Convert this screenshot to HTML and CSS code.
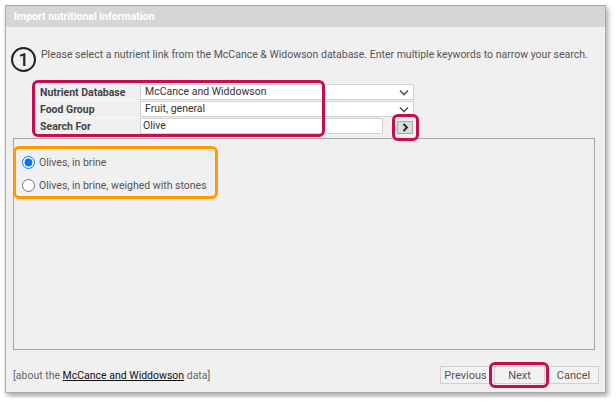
FILE: index.html
```html
<!DOCTYPE html>
<html lang="en">
<head>
    <meta charset="UTF-8">
    <title>Import nutritional information</title>
    <link rel="stylesheet" href="styles.css">
</head>
<body>

    <!-- import dialog -->
    <div class="dialog">
        <div class="titlebar">Import nutritional information</div>

        <div class="dialog-body">
            <div class="intro">
                <span class="step">1</span>
                <p>Please select a nutrient link from the McCance &amp; Widowson database. Enter multiple keywords to narrow your search.</p>
            </div>

            <!-- search fields -->
            <div class="fields">
                <table class="search-table">
                    <tr>
                        <td class="label">Nutrient Database</td>
                        <td>
                            <div class="select">
                                <span>McCance and Widdowson</span>
                                <svg width="10" height="7" viewBox="0 0 10 7"><path d="M1 1.5 L5 5.5 L9 1.5" fill="none" stroke="#555" stroke-width="1.6"/></svg>
                            </div>
                        </td>
                    </tr>
                    <tr>
                        <td class="label">Food Group</td>
                        <td>
                            <div class="select">
                                <span>Fruit, general</span>
                                <svg width="10" height="7" viewBox="0 0 10 7"><path d="M1 1.5 L5 5.5 L9 1.5" fill="none" stroke="#555" stroke-width="1.6"/></svg>
                            </div>
                        </td>
                    </tr>
                    <tr>
                        <td class="label">Search For</td>
                        <td>
                            <div class="search-cell">
                                <div class="text-input">Olive</div>
                                <button class="go-btn marked">
                                    <svg width="7" height="9" viewBox="0 0 7 9"><path d="M1.5 1 L5 4.5 L1.5 8" fill="none" stroke="#222" stroke-width="1.8"/></svg>
                                </button>
                            </div>
                        </td>
                    </tr>
                </table>
                <span class="mark mark-fields"></span>
            </div>

            <!-- search results -->
            <div class="results">
                <div class="result-list">
                    <label class="result"><input type="radio" name="food" checked> Olives, in brine</label>
                    <label class="result"><input type="radio" name="food"> Olives, in brine, weighed with stones</label>
                </div>
            </div>
        </div>

        <div class="footer">
            <span class="about">[about the <a href="#">McCance and Widdowson</a> data]</span>
            <div class="buttons">
                <button class="btn">Previous</button>
                <button class="btn marked">Next</button>
                <button class="btn">Cancel</button>
            </div>
        </div>
    </div>

</body>
</html>
```

FILE: styles.css
```css
body {
    margin: 0;
    background-color: #fff;
    font-family: Roboto, "Liberation Sans", sans-serif;
    font-size: 10.5px;
    color: #555;
}
/* dialog frame */
.dialog {
    box-sizing: border-box;
    width: 601px;
    height: 388px;
    margin: 5px;
    display: flex;
    flex-direction: column;
    background-color: #f0f0f0;
    border: 1px solid #a9a9a9;
    box-shadow: 2px 3px 5px rgba(0, 0, 0, 0.35);
}
.titlebar {
    height: 21px;
    line-height: 21px;
    padding-left: 8px;
    background-color: #d6d6d6;
    color: #fff;
    font-weight: bold;
    font-size: 10.5px;
}
.dialog-body {
    flex-grow: 1;
    display: flex;
    flex-direction: column;
    padding: 0 10px 0 7px;
}
/* step number + instructions */
.intro {
    display: flex;
    align-items: flex-start;
    gap: 5px;
    margin-top: 20px;
    margin-left: -2px;
}
.step {
    box-sizing: border-box;
    flex-shrink: 0;
    width: 25px;
    height: 25px;
    border: 2px solid #222;
    border-radius: 50%;
    display: flex;
    align-items: center;
    justify-content: center;
    font-size: 18px;
    font-weight: 500;
    color: #222;
}
.intro p {
    margin: 0;
    padding-top: 1px;
    line-height: 14px;
    white-space: nowrap;
}
/* search fields */
.fields {
    position: relative;
    align-self: flex-start;
    margin: 12px 0 0 24px;
}
.search-table {
    border-collapse: collapse;
}
.search-table td {
    padding: 0;
    height: 16px;
}
.search-table .label {
    width: 100px;
    padding-left: 3px;
    font-weight: bold;
    color: #444;
    border-bottom: 1px solid #fafafa;
}
.select,
.text-input {
    box-sizing: border-box;
    height: 16px;
    line-height: 14px;
    padding-left: 4px;
    background-color: #fff;
    border: 1px solid #d2d2d2;
    color: #333;
}
.select {
    width: 274px;
    display: flex;
    align-items: center;
    justify-content: space-between;
    padding-right: 4px;
}
.search-cell {
    display: flex;
    align-items: center;
    gap: 14px;
}
.text-input {
    width: 243px;
    padding-left: 2px;
}
.go-btn {
    box-sizing: border-box;
    width: 16px;
    height: 13px;
    margin-top: 3px;
    padding: 0;
    display: flex;
    align-items: center;
    justify-content: center;
    background-color: #dcdcdc;
    border: 1px solid #aaa;
}
/* highlight annotations */
.mark {
    position: absolute;
    box-sizing: border-box;
    border: 3px solid #c90b52;
    border-radius: 6px;
    pointer-events: none;
}
.mark-fields {
    left: -5px;
    top: -4px;
    width: 293px;
    height: 57px;
}
.marked {
    position: relative;
}
.marked::after {
    content: "";
    position: absolute;
    border: 3px solid #c90b52;
    border-radius: 6px;
}
.go-btn.marked::after {
    left: -6px;
    right: -7px;
    top: -8px;
    bottom: -8px;
}
.btn.marked::after {
    left: -6px;
    right: -5px;
    top: -5px;
    bottom: -5px;
}
/* result list */
.results {
    flex-grow: 1;
    margin-top: 3px;
    border: 1px solid #a8a8a8;
}
.result-list {
    display: inline-flex;
    flex-direction: column;
    gap: 3px;
    margin: 7px 0 0 -1px;
    padding: 3px 8px 1px 0;
    border: 3px solid #ff9a00;
    border-radius: 6px;
}
.result {
    display: flex;
    align-items: center;
    height: 20px;
}
.result input {
    width: 13px;
    height: 13px;
    margin: 0 4px 0 6px;
}
/* footer */
.footer {
    display: flex;
    align-items: center;
    justify-content: space-between;
    padding: 16px 6px 8px 7px;
}
.about {
    color: #666;
}
.about a {
    color: #111;
}
.buttons {
    display: flex;
    gap: 3px;
}
.btn {
    box-sizing: border-box;
    width: 51px;
    height: 18px;
    padding: 0;
    font-family: Roboto, "Liberation Sans", sans-serif;
    font-size: 11px;
    color: #555;
    background-color: #f2f2f2;
    border: 1px solid #cfcfcf;
}
```
